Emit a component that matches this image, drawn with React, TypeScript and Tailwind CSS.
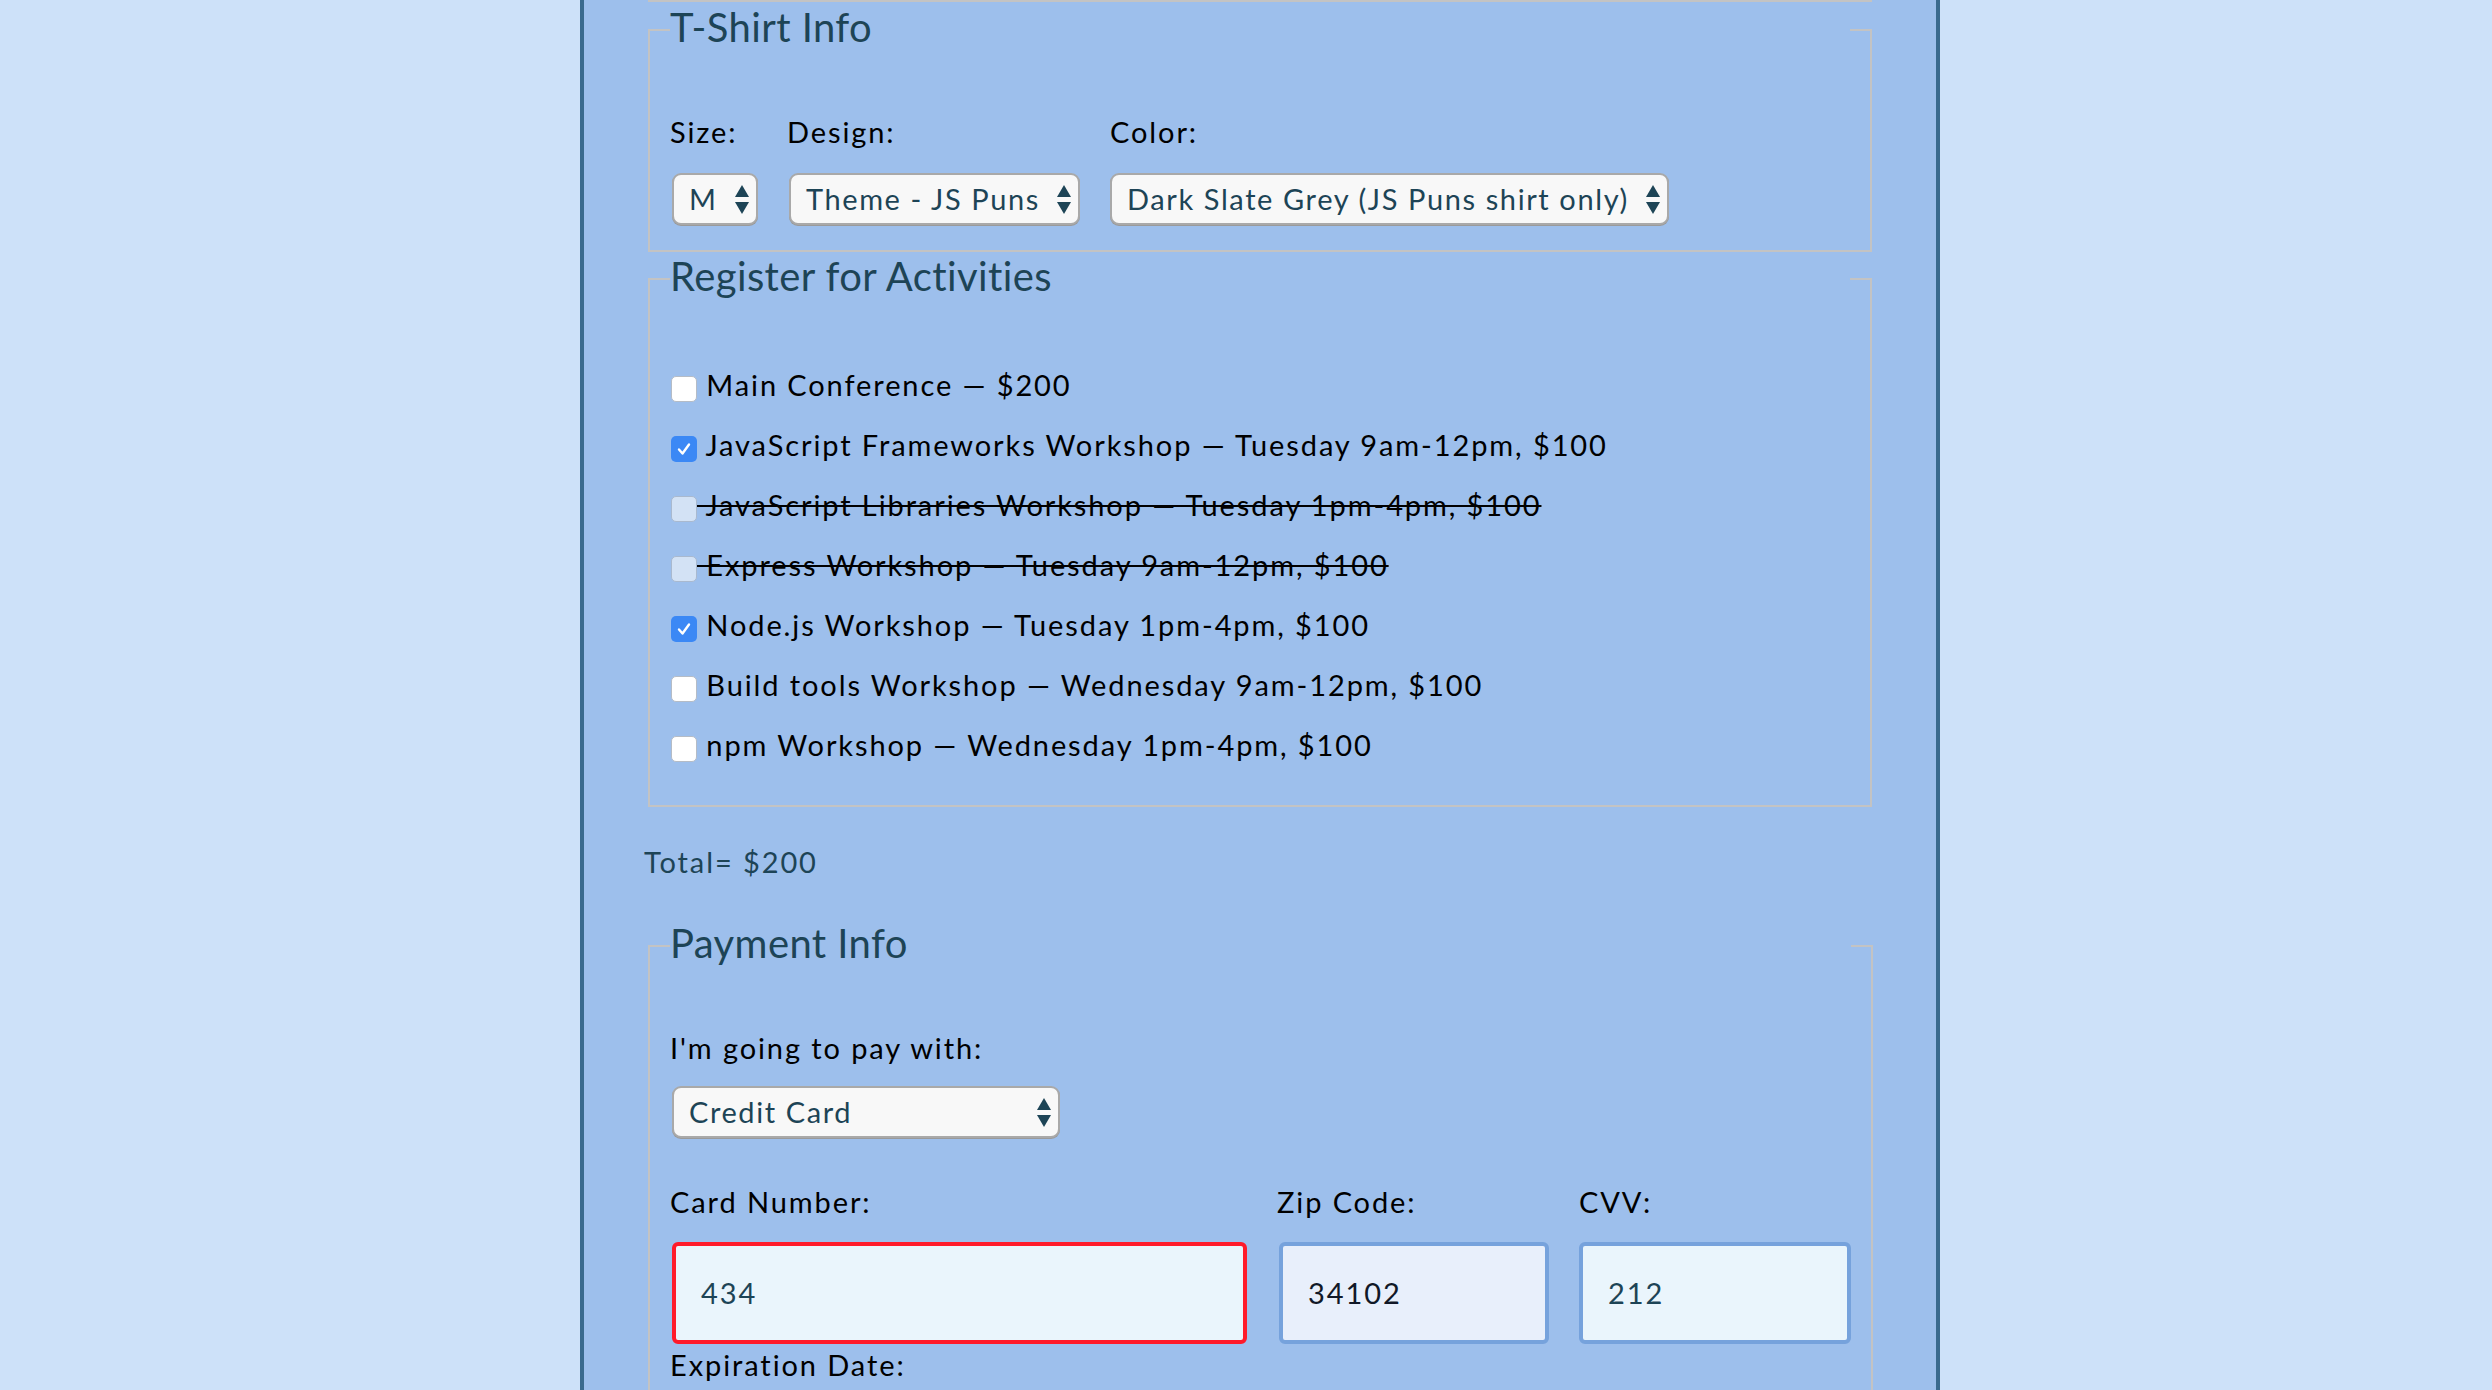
import React from 'react';

const teal = 'text-[#1d4456]';

const Arrows = () => (
  <svg width="14" height="29" viewBox="0 0 14 29" className="shrink-0">
    <path d="M7 0 L14 12 L0 12 Z" fill="#1d4456" />
    <path d="M0 17 L14 17 L7 29 Z" fill="#1d4456" />
  </svg>
);

const FakeSelect: React.FC<{ value: string; className: string }> = ({ value, className }) => (
  <div
    className={`flex h-[52px] items-center justify-between rounded-[9px] border-2 border-[#a9a9a9] bg-[#f8f8f8] pl-[15px] pr-[7px] tracking-[1.6px] shadow-[0_1px_0_#9a9a9a] ${teal} ${className}`}
  >
    <span className="whitespace-nowrap">{value}</span>
    <Arrows />
  </div>
);

type BoxState = 'off' | 'on' | 'disabled';

const Checkbox: React.FC<{ state: BoxState }> = ({ state }) => {
  if (state === 'on') {
    return (
      <span className="mt-[8px] flex h-[26px] w-[26px] shrink-0 items-center justify-center rounded-[5px] bg-[#3b88f5]">
        <svg width="16" height="16" viewBox="0 0 16 16" fill="none">
          <path d="M3 8.5 L6.5 12.5 L13 3.5" stroke="#fff" strokeWidth="2.4" strokeLinecap="round" strokeLinejoin="round" />
        </svg>
      </span>
    );
  }
  return (
    <span
      className={`mt-[8px] h-[26px] w-[26px] shrink-0 rounded-[5px] border ${
        state === 'disabled' ? 'border-[#a9b9cf] bg-[#d3e2f5]' : 'border-[#b5bcc6] bg-white'
      }`}
    />
  );
};

const activities: { text: string; state: BoxState }[] = [
  { text: 'Main Conference — $200', state: 'off' },
  { text: 'JavaScript Frameworks Workshop — Tuesday 9am-12pm, $100', state: 'on' },
  { text: 'JavaScript Libraries Workshop — Tuesday 1pm-4pm, $100', state: 'disabled' },
  { text: 'Express Workshop — Tuesday 9am-12pm, $100', state: 'disabled' },
  { text: 'Node.js Workshop — Tuesday 1pm-4pm, $100', state: 'on' },
  { text: 'Build tools Workshop — Wednesday 9am-12pm, $100', state: 'off' },
  { text: 'npm Workshop — Wednesday 1pm-4pm, $100', state: 'off' },
];

const legendCls = `w-full pb-[5px] text-[40px] leading-[48px] tracking-[0.4px] ${teal}`;

export default function App() {
  return (
    <div className="min-h-[1390px] bg-[#cde1f9] font-['Lato','Open_Sans',sans-serif] text-[29px] leading-[36px] tracking-[1.9px] text-black">
      <div className="ml-[580px] min-h-[1390px] w-[1360px] border-x-4 border-[#3a6a8e] bg-[#9dbfec] px-[60px]">
        {/* bottom edge of the basic info fieldset */}
        <div className="mx-1 h-[2px] bg-[#c3c3c3]" />

        {/* T-Shirt */}
        <fieldset className="mx-1 mt-[1px] border-2 border-[#c3c3c3] px-[20px] pb-[25px]">
          <legend className={legendCls}>T-Shirt Info</legend>
          <div className="mt-[58px] flex gap-[29px]">
            <div className="flex w-[88px] flex-col gap-[23px]">
              <label>Size:</label>
              <FakeSelect value="M" className="ml-[2px] w-[86px]" />
            </div>
            <div className="flex w-[293px] flex-col gap-[23px]">
              <label>Design:</label>
              <FakeSelect value="Theme - JS Puns" className="ml-[2px] w-[291px]" />
            </div>
            <div className="ml-[1px] flex flex-col gap-[23px]">
              <label>Color:</label>
              <FakeSelect value="Dark Slate Grey (JS Puns shirt only)" className="w-[559px]" />
            </div>
          </div>
        </fieldset>

        {/* Activities */}
        <fieldset className="mx-1 border-2 border-[#c3c3c3] px-[20px] pb-[30px]">
          <legend className={legendCls}>Register for Activities</legend>
          <div className="mt-[50px] flex flex-col">
            {activities.map((a) => (
              <label key={a.text} className="flex h-[60px] items-center pl-[1px]">
                <Checkbox state={a.state} />
                <span className={`whitespace-pre ${a.state === 'disabled' ? 'line-through decoration-2' : ''}`}>
                  {'\u00a0' + a.text}
                </span>
              </label>
            ))}
          </div>
        </fieldset>

        <p className={`mt-[37px] ${teal}`}>Total= $200</p>

        {/* Payment */}
        <fieldset className="mx-1 mt-[39px] border-2 border-[#c3c3c3] px-[20px] pb-[40px]">
          <legend className={legendCls}>Payment Info</legend>
          <label className="mt-[58px] block">I'm going to pay with:</label>
          <FakeSelect value="Credit Card" className="ml-[2px] mt-[20px] w-[388px]" />

          <div className="mt-[46px] flex gap-[30px]">
            <div className="flex w-[577px] flex-col gap-[22px]">
              <label>Card Number:</label>
              <div className="ml-[2px] flex h-[102px] items-center rounded-[6px] border-4 border-[#ff1a2a] bg-[#eaf5fc] px-[25px] text-[#1d4456]">
                434
              </div>
            </div>
            <div className="flex w-[272px] flex-col gap-[22px]">
              <label>Zip Code:</label>
              <div className="ml-[2px] flex h-[102px] items-center rounded-[6px] border-4 border-[#76a2dc] bg-[#e8effb] px-[25px] text-[#111827]">
                34102
              </div>
            </div>
            <div className="flex w-[272px] flex-col gap-[22px]">
              <label>CVV:</label>
              <div className="flex h-[102px] items-center rounded-[6px] border-4 border-[#76a2dc] bg-[#eaf5fc] px-[25px] text-[#1d4456]">
                212
              </div>
            </div>
          </div>
          <label className="mt-[3px] block">Expiration Date:</label>
        </fieldset>
      </div>
    </div>
  );
}
